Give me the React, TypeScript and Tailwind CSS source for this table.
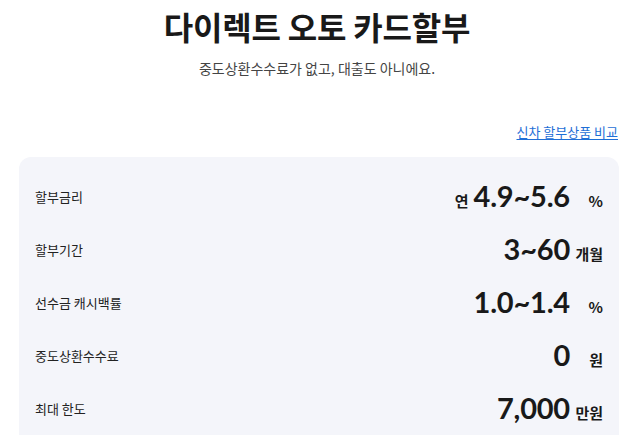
const rows = [
  { label: "할부금리", prefix: "연", value: "4.9~5.6", unit: "%" },
  { label: "할부기간", prefix: "", value: "3~60", unit: "개월" },
  { label: "선수금 캐시백률", prefix: "", value: "1.0~1.4", unit: "%" },
  { label: "중도상환수수료", prefix: "", value: "0", unit: "원" },
  { label: "최대 한도", prefix: "", value: "7,000", unit: "만원" },
]

export default function App() {
  return (
    <div className="w-[634px] h-[435px] overflow-hidden bg-white font-['Noto_Sans_CJK_KR',sans-serif] text-[#191919]">
      <div className="flex flex-col items-center pt-[6px]">
        <h1 className="text-[32px] leading-[40px] font-bold tracking-[-0.2px]">다이렉트 오토 카드할부</h1>
        <p className="mt-[12px] text-[14px] leading-[20px] text-[#444]">중도상환수수료가 없고, 대출도 아니에요.</p>
      </div>
      <div className="flex justify-end px-[16px] mt-[44px]">
        <a href="#" className="text-[13px] leading-[20px] text-[#1f6fd6] underline underline-offset-2">
          신차 할부상품 비교
        </a>
      </div>
      <div className="ml-[19px] mr-[15px] mt-[15px] rounded-[12px] bg-[#f4f5fa] pl-[16px] pr-[16px] pt-[13px] pb-[20px]">
        {rows.map((r) => (
          <div key={r.label} className="flex items-center justify-between h-[53px]">
            <span className="text-[13px] text-[#222]">{r.label}</span>
            <div className="flex items-baseline">
              {r.prefix && <span className="text-[15px] font-bold mr-[5px]">{r.prefix}</span>}
              <span className="font-['Lato',sans-serif] text-[29px] font-bold leading-[32px] tracking-[-0.2px]">
                {r.value}
              </span>
              <span className="w-[33px] text-right text-[15px] font-bold">{r.unit}</span>
            </div>
          </div>
        ))}
      </div>
    </div>
  )
}
